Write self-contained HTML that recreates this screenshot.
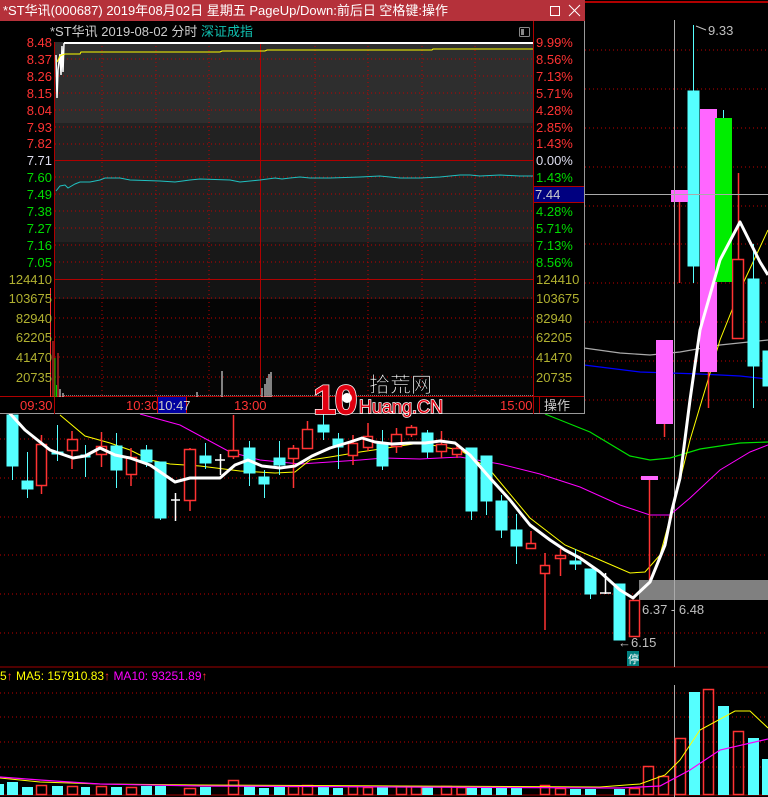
<!DOCTYPE html>
<html><head><meta charset="utf-8"><style>
html,body{margin:0;padding:0;background:#000;width:768px;height:797px;overflow:hidden}
svg{display:block}
text{font-family:"Liberation Sans","Noto Sans CJK SC",sans-serif}
</style></head><body>
<svg width="768" height="797" viewBox="0 0 768 797" xmlns="http://www.w3.org/2000/svg">
<rect width="768" height="797" fill="#000"/>
<line x1="585" y1="2" x2="768" y2="2" stroke="#b00000" stroke-width="2"/>
<g stroke="#c00000" stroke-dasharray="1,3" stroke-width="1">
<line x1="585" y1="50" x2="768" y2="50"/><line x1="585" y1="89" x2="768" y2="89"/>
<line x1="585" y1="128" x2="768" y2="128"/><line x1="585" y1="167" x2="768" y2="167"/>
<line x1="585" y1="206" x2="768" y2="206"/><line x1="585" y1="244" x2="768" y2="244"/>
<line x1="585" y1="283" x2="768" y2="283"/><line x1="585" y1="322" x2="768" y2="322"/>
<line x1="585" y1="361" x2="768" y2="361"/><line x1="585" y1="400" x2="768" y2="400"/>
<line x1="0" y1="439" x2="768" y2="439"/><line x1="0" y1="478" x2="768" y2="478"/>
<line x1="0" y1="517" x2="768" y2="517"/><line x1="0" y1="555" x2="768" y2="555"/>
<line x1="0" y1="594" x2="768" y2="594"/><line x1="0" y1="633" x2="768" y2="633"/>
<line x1="0" y1="693" x2="768" y2="693"/><line x1="0" y1="717" x2="768" y2="717"/>
<line x1="0" y1="742" x2="768" y2="742"/><line x1="0" y1="767" x2="768" y2="767"/>
</g>
<line x1="0" y1="667" x2="768" y2="667" stroke="#a00000" stroke-width="1"/>
<line x1="0" y1="795" x2="768" y2="795" stroke="#a00000" stroke-width="1"/>
<line x1="674.5" y1="20" x2="674.5" y2="667" stroke="#aaa" stroke-width="1"/>
<line x1="674.5" y1="685" x2="674.5" y2="797" stroke="#aaa" stroke-width="1"/>
<rect x="639" y="580" width="129" height="20" fill="#808080"/>
<line x1="674.5" y1="580" x2="674.5" y2="600" stroke="#aaa"/>

<polyline fill="none" stroke="#aaa" stroke-width="1.2" points="584,348 620,353 650,355 680,352 720,345 768,340"/>
<polyline fill="none" stroke="#0000ff" stroke-width="1.2" points="584,365 640,372 700,374 740,376 768,379"/>
<polyline fill="none" stroke="#00e000" stroke-width="1.2" points="545,414 590,432 630,456 650,460 670,458 700,449 740,443 768,442"/>
<polyline fill="none" stroke="#ff00ff" stroke-width="1" points="140,414 180,425 230,452 260,460 300,464 330,462 360,460 384,458 420,459 460,457 500,464 540,474 580,487 620,505 650,515 670,515 690,498 720,470 750,452 768,445"/>
<polyline fill="none" stroke="#ffff00" stroke-width="1" points="60,415 85,436 110,443 130,450 150,460 170,464 200,466 240,471 275,473 295,472 310,460 330,457 360,452 420,443 460,450 490,470 530,518 565,545 600,560 630,573 645,572 660,555 675,500 690,440 705,390 720,340 740,290 768,230"/>

<g fill="#55ffff" stroke="#55ffff">
<line x1="12.5" y1="415" x2="12.5" y2="480"/><rect x="7" y="415" width="11" height="51"/>
<line x1="27.5" y1="452" x2="27.5" y2="498"/><rect x="22" y="481" width="11" height="8"/>
<line x1="57.5" y1="425" x2="57.5" y2="461"/><rect x="52" y="452" width="11" height="2"/>
<line x1="85.5" y1="445" x2="85.5" y2="477"/><rect x="81" y="455" width="9" height="2"/>
<line x1="116.5" y1="433" x2="116.5" y2="488"/><rect x="111" y="446" width="11" height="24"/>
<line x1="146.5" y1="445" x2="146.5" y2="467"/><rect x="141" y="450" width="11" height="12"/>
<line x1="160.5" y1="462" x2="160.5" y2="520"/><rect x="155" y="462" width="11" height="56"/>
<line x1="205.5" y1="443" x2="205.5" y2="469"/><rect x="200" y="456" width="11" height="7"/>
<line x1="249.5" y1="441" x2="249.5" y2="486"/><rect x="244" y="448" width="11" height="25"/>
<line x1="264.5" y1="470" x2="264.5" y2="498"/><rect x="259" y="477" width="10" height="7"/>
<line x1="279.5" y1="441" x2="279.5" y2="475"/><rect x="274" y="458" width="11" height="7"/>
<line x1="323.5" y1="412" x2="323.5" y2="440"/><rect x="318" y="425" width="11" height="7"/>
<line x1="338.5" y1="433" x2="338.5" y2="469"/><rect x="333" y="439" width="10" height="8"/>
<line x1="382.5" y1="430" x2="382.5" y2="470"/><rect x="377" y="443" width="11" height="23"/>
<line x1="427.5" y1="430" x2="427.5" y2="458"/><rect x="422" y="433" width="11" height="19"/>
<line x1="471.5" y1="448" x2="471.5" y2="520"/><rect x="466" y="448" width="11" height="63"/>
<line x1="486.5" y1="456" x2="486.5" y2="515"/><rect x="481" y="456" width="11" height="45"/>
<line x1="501.5" y1="495" x2="501.5" y2="538"/><rect x="496" y="501" width="11" height="29"/>
<line x1="516.5" y1="514" x2="516.5" y2="564"/><rect x="511" y="530" width="11" height="16"/>
<line x1="575.5" y1="549" x2="575.5" y2="570"/><rect x="570" y="561" width="11" height="3"/>
<line x1="590.5" y1="569" x2="590.5" y2="599"/><rect x="585" y="569" width="11" height="25"/>
<rect x="614" y="584" width="11" height="56"/>
<line x1="693.5" y1="25" x2="693.5" y2="283"/><rect x="688" y="91" width="11" height="175"/>
<line x1="753.5" y1="244" x2="753.5" y2="408"/><rect x="748" y="279" width="11" height="87"/>
<rect x="763" y="351" width="6" height="35"/>
</g>
<g fill="none" stroke="#ff3333" stroke-width="1.5">
<line x1="41.5" y1="435" x2="41.5" y2="494"/><rect x="36.5" y="444.5" width="10" height="41" fill="#000"/>
<line x1="72" y1="431" x2="72" y2="469"/><rect x="67.5" y="439.5" width="10" height="11" fill="#000"/>
<line x1="101.5" y1="432" x2="101.5" y2="467"/><rect x="96.5" y="446.5" width="10" height="8" fill="#000"/>
<line x1="131" y1="448" x2="131" y2="486"/><rect x="126.5" y="457.5" width="10" height="17" fill="#000"/>
<line x1="190" y1="448" x2="190" y2="511"/><rect x="184.5" y="449.5" width="11" height="51" fill="#000"/>
<line x1="233.5" y1="415" x2="233.5" y2="459"/><rect x="228.5" y="450.5" width="10" height="6" fill="#000"/>
<line x1="293.5" y1="445" x2="293.5" y2="488"/><rect x="288.5" y="448.5" width="10" height="10" fill="#000"/>
<line x1="307.5" y1="421" x2="307.5" y2="449"/><rect x="302.5" y="429.5" width="10" height="19" fill="#000"/>
<line x1="353" y1="435" x2="353" y2="465"/><rect x="348.5" y="443.5" width="9" height="12" fill="#000"/>
<line x1="368" y1="423" x2="368" y2="451"/><rect x="363.5" y="436.5" width="9" height="11" fill="#000"/>
<line x1="396.5" y1="428" x2="396.5" y2="453"/><rect x="391.5" y="434.5" width="10" height="12" fill="#000"/>
<line x1="411.5" y1="425" x2="411.5" y2="437"/><rect x="406.5" y="427.5" width="10" height="7" fill="#000"/>
<line x1="441.5" y1="431" x2="441.5" y2="458"/><rect x="436.5" y="444.5" width="10" height="7" fill="#000"/>
<line x1="457" y1="443" x2="457" y2="458"/><rect x="452.5" y="448.5" width="9" height="6" fill="#000"/>
<line x1="531" y1="531" x2="531" y2="549"/><rect x="526.5" y="543.5" width="9" height="5" fill="#000"/>
<line x1="545" y1="553" x2="545" y2="630"/><rect x="540.5" y="565.5" width="9" height="8" fill="#000"/>
<line x1="560.5" y1="549" x2="560.5" y2="576"/><rect x="555.5" y="555.5" width="10" height="3" fill="#000"/>
<rect x="629.5" y="600.5" width="10" height="36" fill="#000"/>
<line x1="649.5" y1="477" x2="649.5" y2="580"/>
<line x1="664.5" y1="424" x2="664.5" y2="437"/>
<line x1="679.5" y1="202" x2="679.5" y2="283"/>
<line x1="708.5" y1="372" x2="708.5" y2="408"/>
<line x1="738.5" y1="173" x2="738.5" y2="338"/><rect x="732.5" y="259.5" width="11" height="79" fill="#000"/>
</g>
<g stroke="#fff" stroke-width="1.5">
<line x1="175.5" y1="493" x2="175.5" y2="521"/><line x1="171" y1="500" x2="180" y2="500"/>
<line x1="220.5" y1="454" x2="220.5" y2="475"/><line x1="215" y1="460" x2="225" y2="460"/>
<line x1="605.5" y1="573" x2="605.5" y2="594"/><line x1="600" y1="593" x2="611" y2="593"/>
</g>
<rect x="641" y="476" width="17" height="4" fill="#ff66ff"/>
<rect x="656" y="340" width="17" height="84" fill="#ff66ff"/>
<rect x="671" y="190" width="17" height="12" fill="#ff66ff"/>
<rect x="700" y="109" width="17" height="263" fill="#ff66ff"/>
<line x1="723.5" y1="110" x2="723.5" y2="118" stroke="#55ffff"/>
<rect x="715" y="118" width="17" height="164" fill="#00ee00"/>
<line x1="674.5" y1="190" x2="674.5" y2="202" stroke="#aaa"/>
<line x1="585" y1="194.5" x2="768" y2="194.5" stroke="#aaa" stroke-width="1"/>
<polyline fill="none" stroke="#fff" stroke-width="3" stroke-linejoin="round" points="5,408 25,430 50,450 73,458 85,456 100,448 115,455 130,458 150,465 175,482 190,478 205,478 220,478 235,465 248,460 262,466 280,468 295,466 312,456 330,448 350,442 362,438 375,442 392,444 410,443 425,443 440,441 455,443 470,455 490,478 510,500 530,525 550,540 565,550 580,558 600,572 620,590 633,598 650,582 665,545 672,510 680,478 690,400 700,330 720,260 740,222 760,262 768,275"/>
<text x="708" y="35" fill="#c0c0c0" font-size="13">9.33</text>
<path d="M696 26 L706 30" stroke="#c0c0c0" fill="none"/>
<text x="642" y="614" fill="#c0c0c0" font-size="13">6.37 - 6.48</text>
<text x="618" y="647" fill="#c0c0c0" font-size="13">←6.15</text>
<rect x="627" y="651" width="12" height="15" fill="#008080"/>
<text x="628" y="663" fill="#fff" font-size="11">停</text>

<text x="0" y="680" fill="#ffff00" font-size="12">5<tspan fill="#ff3333">↑</tspan>  MA5: 157910.83<tspan fill="#ff3333">↑</tspan>  <tspan fill="#ff00ff">MA10: 93251.89</tspan><tspan fill="#ff3333">↑</tspan></text>
<g fill="#55ffff">
<rect x="0" y="784" width="4" height="11"/><rect x="7" y="782" width="11" height="13"/><rect x="22" y="787" width="11" height="8"/>
<rect x="52" y="786" width="11" height="9"/><rect x="81" y="787" width="9" height="8"/><rect x="111" y="787" width="11" height="8"/>
<rect x="141" y="786" width="11" height="9"/><rect x="155" y="786" width="11" height="9"/><rect x="200" y="787" width="11" height="8"/>
<rect x="244" y="786" width="11" height="9"/><rect x="259" y="788" width="10" height="7"/><rect x="274" y="787" width="11" height="8"/>
<rect x="318" y="787" width="11" height="8"/><rect x="333" y="788" width="10" height="7"/><rect x="377" y="787" width="11" height="8"/>
<rect x="422" y="787" width="11" height="8"/><rect x="466" y="788" width="11" height="7"/><rect x="481" y="788" width="11" height="7"/>
<rect x="496" y="788" width="11" height="7"/><rect x="511" y="788" width="11" height="7"/><rect x="570" y="789" width="11" height="6"/>
<rect x="585" y="789" width="11" height="6"/><rect x="614" y="789" width="11" height="6"/>
<rect x="689" y="692" width="11" height="103"/><rect x="718" y="706" width="11" height="89"/><rect x="748" y="738" width="11" height="57"/><rect x="762" y="759" width="6" height="36"/>
</g>
<g fill="none" stroke="#ff3333" stroke-width="1.5">
<rect x="36.5" y="785.5" width="10" height="9"/><rect x="67.5" y="786.5" width="10" height="8"/><rect x="96.5" y="786.5" width="10" height="8"/>
<rect x="126.5" y="787.5" width="10" height="7"/><rect x="184.5" y="788.5" width="11" height="6"/><rect x="228.5" y="780.5" width="10" height="14"/>
<rect x="288.5" y="786.5" width="10" height="8"/><rect x="302.5" y="785.5" width="10" height="9"/><rect x="348.5" y="786.5" width="9" height="8"/>
<rect x="363.5" y="787.5" width="9" height="7"/><rect x="396.5" y="786.5" width="10" height="8"/><rect x="411.5" y="786.5" width="10" height="8"/>
<rect x="441.5" y="786.5" width="10" height="8"/><rect x="457" y="787.5" width="9" height="7"/><rect x="540.5" y="785.5" width="9" height="9"/>
<rect x="555.5" y="788.5" width="10" height="6"/><rect x="629.5" y="788.5" width="10" height="6"/>
<rect x="643.5" y="766.5" width="10" height="28"/><rect x="658.5" y="776.5" width="10" height="18"/>
<rect x="675.5" y="738.5" width="10" height="56"/><rect x="703.5" y="689.5" width="10" height="105"/><rect x="733.5" y="731.5" width="10" height="63"/>
</g>
<polyline fill="none" stroke="#ffff00" stroke-width="1" points="0,778 40,782 100,784 200,785 400,786 600,787 640,784 665,775 680,760 700,730 735,711 750,711 768,728"/>
<polyline fill="none" stroke="#ff00ff" stroke-width="1.2" points="0,777 40,780 100,784 200,786 400,787 620,788 660,786 690,770 720,750 768,739"/>

<!-- POPUP -->
<rect x="0" y="0" width="585" height="414" fill="#000"/>
<rect x="0" y="0" width="585" height="21" fill="#b5313a"/>
<text x="3" y="15" fill="#fff" font-size="13">*ST华讯(000687) 2019年08月02日 星期五 PageUp/Down:前后日 空格键:操作</text>
<rect x="550.5" y="6.5" width="9" height="9" fill="none" stroke="#fff"/>
<path d="M569 5 L580 16 M580 5 L569 16" stroke="#fff" stroke-width="1"/>
<line x1="584.5" y1="21" x2="584.5" y2="414" stroke="#999"/>
<line x1="0" y1="413.5" x2="585" y2="413.5" stroke="#999"/>
<text x="50" y="36" fill="#ccc" font-size="13">*ST华讯  2019-08-02 分时 <tspan fill="#10c0b0">深证成指</tspan></text>
<rect x="519.5" y="27.5" width="10" height="9" fill="none" stroke="#888" rx="1"/><rect x="521" y="29" width="3" height="6" fill="#888"/>
<rect x="55" y="42" width="478" height="81" fill="#2e2e2e"/>
<rect x="55" y="123" width="478" height="119" fill="#222"/>
<rect x="55" y="242" width="478" height="37" fill="#181818"/>
<rect x="55" y="279" width="478" height="20" fill="#141414"/>
<rect x="55" y="299" width="478" height="98" fill="#050505"/>
<g stroke="#c00000" stroke-dasharray="1,3" stroke-width="1">
<line x1="55" y1="59" x2="533" y2="59"/><line x1="55" y1="76" x2="533" y2="76"/><line x1="55" y1="93" x2="533" y2="93"/>
<line x1="55" y1="110" x2="533" y2="110"/><line x1="55" y1="127" x2="533" y2="127"/><line x1="55" y1="144" x2="533" y2="144"/>
<line x1="55" y1="177" x2="533" y2="177"/><line x1="55" y1="194" x2="533" y2="194"/><line x1="55" y1="211" x2="533" y2="211"/>
<line x1="55" y1="228" x2="533" y2="228"/><line x1="55" y1="245" x2="533" y2="245"/><line x1="55" y1="262" x2="533" y2="262"/>
<line x1="55" y1="298" x2="533" y2="298"/><line x1="55" y1="318" x2="533" y2="318"/><line x1="55" y1="337" x2="533" y2="337"/>
<line x1="55" y1="357" x2="533" y2="357"/><line x1="55" y1="377" x2="533" y2="377"/>
<line x1="102" y1="42" x2="102" y2="397"/><line x1="156" y1="42" x2="156" y2="397"/><line x1="209" y1="42" x2="209" y2="397"/>
<line x1="315" y1="42" x2="315" y2="397"/><line x1="368" y1="42" x2="368" y2="397"/><line x1="422" y1="42" x2="422" y2="397"/><line x1="475" y1="42" x2="475" y2="397"/>
</g>
<g stroke="#b00000" stroke-width="1">
<line x1="54.5" y1="42" x2="54.5" y2="414"/><line x1="533.5" y1="21" x2="533.5" y2="414"/>
<line x1="55" y1="160.5" x2="533" y2="160.5"/><line x1="55" y1="279.5" x2="533" y2="279.5"/>
<line x1="260.5" y1="42" x2="260.5" y2="397"/><line x1="0" y1="396.5" x2="584" y2="396.5"/>
<line x1="534" y1="186.5" x2="584" y2="186.5"/><line x1="534" y1="202.5" x2="584" y2="202.5"/>
</g>
<rect x="534" y="187" width="50" height="15" fill="#000080"/>
<text x="535" y="199" fill="#ccc" font-size="13">7.44</text>
<line x1="64" y1="43" x2="533" y2="43" stroke="#fff" stroke-width="2"/>
<polyline fill="none" stroke="#fff" stroke-width="1.5" points="56,55 57,98 58,70 60,54 61,75 62,46 63,72 64,43"/>
<polyline fill="none" stroke="#ffff00" stroke-width="1" points="57,62 60,56 62,55 65,54 80,54 81,52 220,52 222,51 265,51 267,50 380,50 400,50 432,50 433,49 533,49"/>
<polyline fill="none" stroke="#20c0c0" stroke-width="1" points="56,191 60,186 65,185 68,188 75,184 80,182 90,182 95,181 100,180 105,178 120,178 130,180 160,181 175,182 190,180 200,179 230,180 240,182 260,180 275,178 282,179 290,178 300,177 310,178 330,178 360,177 380,176 400,178 420,178 440,177 460,175 470,175 480,176 500,175 520,176 533,176"/>
<g stroke="#ff3333" stroke-width="1"><line x1="50.5" y1="288" x2="50.5" y2="397"/><line x1="53" y1="341" x2="53" y2="397"/><line x1="58" y1="353" x2="58" y2="397"/></g>
<g stroke="#00d000" stroke-width="1"><line x1="55" y1="358" x2="55" y2="397"/><line x1="56.5" y1="385" x2="56.5" y2="397"/></g>
<g stroke="#fff" stroke-width="1">
<line x1="60" y1="389" x2="60" y2="397"/><line x1="63" y1="393" x2="63" y2="397"/><line x1="222" y1="371" x2="222" y2="397"/>
<line x1="197" y1="392" x2="197" y2="397"/><line x1="262" y1="388" x2="262" y2="397"/><line x1="265" y1="384" x2="265" y2="397"/>
<line x1="267" y1="378" x2="267" y2="397"/><line x1="269" y1="374" x2="269" y2="397"/><line x1="271" y1="372" x2="271" y2="397"/>
</g>
<line x1="64" y1="395.5" x2="533" y2="395.5" stroke="#777" stroke-dasharray="1,1"/>
<g font-size="13" text-anchor="end">
<g fill="#ff3333"><text x="52" y="47">8.48</text><text x="52" y="64">8.37</text><text x="52" y="81">8.26</text><text x="52" y="98">8.15</text><text x="52" y="115">8.04</text><text x="52" y="132">7.93</text><text x="52" y="148">7.82</text></g>
<text x="52" y="165" fill="#dde">7.71</text>
<g fill="#00dd00"><text x="52" y="182">7.60</text><text x="52" y="199">7.49</text><text x="52" y="216">7.38</text><text x="52" y="233">7.27</text><text x="52" y="250">7.16</text><text x="52" y="267">7.05</text></g>
<g fill="#b0b030"><text x="52" y="284">124410</text><text x="52" y="303">103675</text><text x="52" y="323">82940</text><text x="52" y="342">62205</text><text x="52" y="362">41470</text><text x="52" y="382">20735</text></g>
</g>
<g font-size="13">
<g fill="#ff3333"><text x="536" y="47">9.99%</text><text x="536" y="64">8.56%</text><text x="536" y="81">7.13%</text><text x="536" y="98">5.71%</text><text x="536" y="115">4.28%</text><text x="536" y="132">2.85%</text><text x="536" y="148">1.43%</text></g>
<text x="536" y="165" fill="#dde">0.00%</text>
<g fill="#00dd00"><text x="536" y="182">1.43%</text><text x="536" y="216">4.28%</text><text x="536" y="233">5.71%</text><text x="536" y="250">7.13%</text><text x="536" y="267">8.56%</text></g>
<g fill="#b0b030"><text x="536" y="284">124410</text><text x="536" y="303">103675</text><text x="536" y="323">82940</text><text x="536" y="342">62205</text><text x="536" y="362">41470</text><text x="536" y="382">20735</text></g>
<g fill="#ff3333"><text x="20" y="410">09:30</text><text x="126" y="410">10:30</text><text x="234" y="410">13:00</text><text x="500" y="410">15:00</text></g>
<rect x="157" y="397" width="29" height="16" fill="#0000a0"/><line x1="157.5" y1="397" x2="157.5" y2="413" stroke="#c00"/><line x1="186.5" y1="397" x2="186.5" y2="413" stroke="#c00"/>
<text x="158" y="410" fill="#ccc">10:47</text>
<line x1="539.5" y1="397" x2="539.5" y2="413" stroke="#b00000"/>
<text x="544" y="410" fill="#ccc">操作</text>
</g>
<!-- watermark -->
<text x="313" y="414" fill="#e00010" font-size="42" font-weight="bold" stroke="#fff" stroke-width="1.5" paint-order="stroke" letter-spacing="-2">10</text>
<circle cx="347" cy="398" r="5" fill="#fff"/>
<text x="369" y="392" fill="#fff" font-size="21" stroke="#000" stroke-width="0.8">拾荒网</text>
<text x="359" y="413" fill="#e00010" font-size="18" stroke="#fff" stroke-width="1.5" paint-order="stroke">Huang.CN</text>
</svg>
</body></html>
